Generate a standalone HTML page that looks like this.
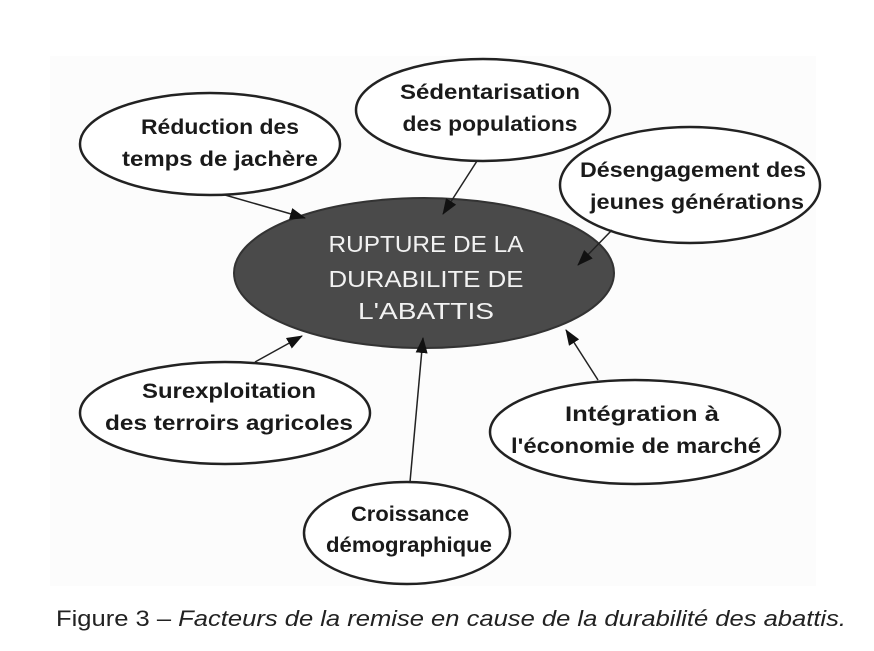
<!DOCTYPE html>
<html><head><meta charset="utf-8"><style>
html,body{margin:0;padding:0;background:#fff;width:874px;height:651px;overflow:hidden}
svg{display:block}
.t{font-family:"Liberation Sans",sans-serif;font-weight:bold;font-size:21px;fill:#1a1a1a;text-anchor:middle}
.w{fill:#f2f2f2;font-weight:normal;font-size:23px}
</style></head><body>
<svg width="874" height="651" viewBox="0 0 874 651">
<defs><marker id="a" markerWidth="16" markerHeight="12" refX="15" refY="6" orient="auto" markerUnits="userSpaceOnUse"><path d="M0,0 L16,6 L0,12 z" fill="#111"/></marker></defs>
<rect x="50" y="56" width="766" height="530" fill="#fcfcfc"/>
<g fill="#fff" stroke="#222" stroke-width="2.5">
<ellipse cx="210" cy="144" rx="130" ry="51"/>
<ellipse cx="483" cy="110" rx="127" ry="51"/>
<ellipse cx="690" cy="185" rx="130" ry="58"/>
<ellipse cx="225" cy="413" rx="145" ry="51"/>
<ellipse cx="635" cy="432" rx="145" ry="52"/>
<ellipse cx="407" cy="533" rx="103" ry="51"/>
</g>
<ellipse cx="424" cy="273" rx="190" ry="75" fill="#4a4a4a" stroke="#333" stroke-width="2"/>
<g stroke="#222" stroke-width="1.5">
<line x1="225" y1="195" x2="305" y2="218" marker-end="url(#a)"/>
<line x1="477" y1="161" x2="443" y2="214" marker-end="url(#a)"/>
<line x1="612" y1="230" x2="578" y2="265" marker-end="url(#a)"/>
<line x1="255" y1="362" x2="302" y2="336" marker-end="url(#a)"/>
<line x1="410" y1="482" x2="423" y2="338" marker-end="url(#a)"/>
<line x1="598" y1="380" x2="566" y2="330" marker-end="url(#a)"/>
</g>
<text class="t" x="220" y="134" textLength="158" lengthAdjust="spacingAndGlyphs">Réduction des</text>
<text class="t" x="220" y="166" textLength="196" lengthAdjust="spacingAndGlyphs">temps de jachère</text>
<text class="t" x="490" y="99" textLength="180" lengthAdjust="spacingAndGlyphs">Sédentarisation</text>
<text class="t" x="490" y="131" textLength="175" lengthAdjust="spacingAndGlyphs">des populations</text>
<text class="t" x="693" y="177" textLength="226" lengthAdjust="spacingAndGlyphs">Désengagement des</text>
<text class="t" x="697" y="209" textLength="214" lengthAdjust="spacingAndGlyphs">jeunes générations</text>
<text class="t w" x="426" y="252" textLength="195" lengthAdjust="spacingAndGlyphs">RUPTURE DE LA</text>
<text class="t w" x="426" y="287" textLength="195" lengthAdjust="spacingAndGlyphs">DURABILITE DE</text>
<text class="t w" x="426" y="319" textLength="136" lengthAdjust="spacingAndGlyphs">L'ABATTIS</text>
<text class="t" x="229" y="398" textLength="174" lengthAdjust="spacingAndGlyphs">Surexploitation</text>
<text class="t" x="229" y="430" textLength="248" lengthAdjust="spacingAndGlyphs">des terroirs agricoles</text>
<text class="t" x="642" y="421" textLength="154" lengthAdjust="spacingAndGlyphs">Intégration à</text>
<text class="t" x="636" y="453" textLength="250" lengthAdjust="spacingAndGlyphs">l'économie de marché</text>
<text class="t" x="410" y="521" textLength="118" lengthAdjust="spacingAndGlyphs">Croissance</text>
<text class="t" x="409" y="552" textLength="166" lengthAdjust="spacingAndGlyphs">démographique</text>
<text x="56" y="626" textLength="790" lengthAdjust="spacingAndGlyphs" font-family="'Liberation Sans',sans-serif" font-size="22" fill="#222">Figure 3 – <tspan font-style="italic">Facteurs de la remise en cause de la durabilité des abattis.</tspan></text>
</svg>
</body></html>
